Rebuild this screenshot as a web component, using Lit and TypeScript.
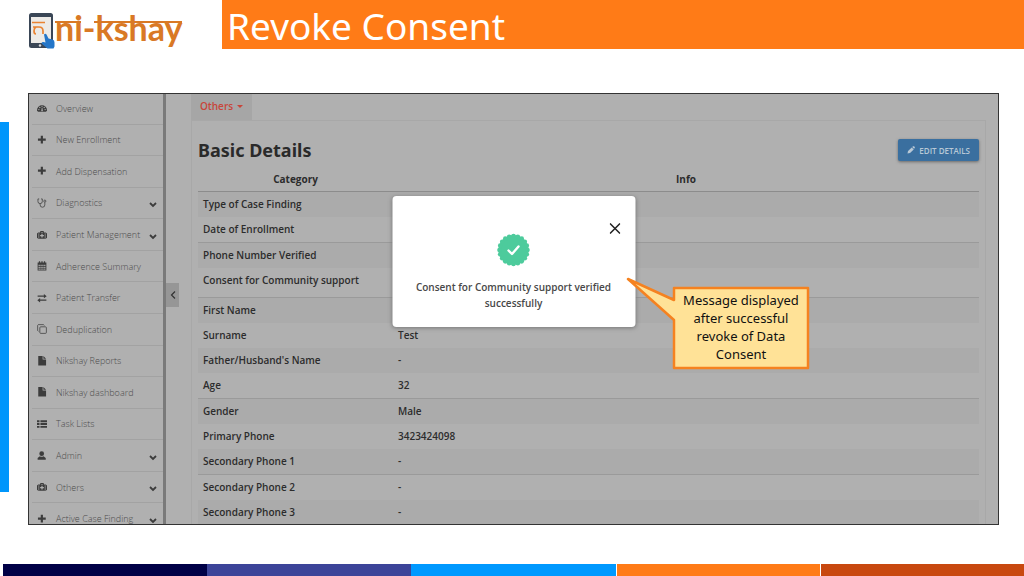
import { LitElement, html, css, svg } from "lit";
import { customElement } from "lit/decorators.js";
import { classMap } from "lit/directives/class-map.js";

const icons: Record<string, unknown> = {
  gauge: svg`<path d="M0 11.500a8 8 0 0 1 16 0l-1.500 2.500h-13z"/><g fill="#aeaeae"><circle cx="3" cy="10.500" r="1.100"/><circle cx="4.500" cy="7.200" r="1.100"/><circle cx="11.500" cy="7.200" r="1.100"/><circle cx="13" cy="10.500" r="1.100"/><circle cx="8" cy="5.600" r="1"/><path d="M7.500 7.500h1.200l.4 3.500a1.400 1.400 0 1 1-2 0z"/></g>`,
  plus: svg`<path d="M6 1h3.500v4.500H14V9H9.500v4.500H6V9H1.500V5.500H6z"/>`,
  steth: svg`<g fill="none" stroke="currentColor" stroke-width="1.200"><path d="M3.500 1.500H1.500v4a3.500 3.500 0 0 0 7 0v-4h-2M5 9v2a3.700 3.700 0 0 0 7.500 0V7"/><circle cx="12.500" cy="5" r="1.700"/></g>`,
  kit: svg`<path fill-rule="evenodd" d="M5 4V2.500L6 1.500h4l1 1V4h3l2 1.500v7L14 14H2l-2-1.500v-7L2 4zm1.500 0h3V3h-3zM7 6v2H5v2h2v2h2v-2h2V8H9V6zM2.500 5v8h1V5zm10 0v8h1V5z"/>`,
  calendar: svg`<path fill-rule="evenodd" d="M1 2.500h2V.5h2v2h2V.5h2v2h2V.5h2v2h2V15H1zM2.500 6v2h2V6zm3 0v2h2V6zm3 0v2h2V6zm3 0v2h2V6zm-9 3v2h2V9zm3 0v2h2V9zm3 0v2h2V9zm3 0v2h2V9zm-9 3v2h2v-2zm3 0v2h2v-2zm3 0v2h2v-2zm3 0v2h2v-2z"/>`,
  transfer: svg`<path d="M1 4h10V1.500L15.500 5 11 8.500V6H1zM15 10.500H5V8L.5 11.500 5 15v-2.500h10z"/>`,
  copy: svg`<g fill="none" stroke="currentColor" stroke-width="1.200"><rect x="4.500" y="4.500" width="10.500" height="10.500" rx="1.500"/><path d="M2.500 11.500H2L1 10.500V2l1-1h8.500l1 1v.5"/></g>`,
  file: svg`<path d="M2 0h7v5.500h5.500V15H2zM10.200 0l4.300 4.300h-4.300z"/>`,
  list: svg`<path d="M0 2h4v3H0zm5.500 0H16v3H5.500zM0 6.500h4v3H0zm5.500 0H16v3H5.500zM0 11h4v3H0zm5.500 0H16v3H5.500z"/>`,
  user: svg`<circle cx="7.500" cy="4.300" r="3.800"/><path d="M1 14v-3l3.500-2.800q3 1.800 6 0L14 11v3z"/>`,
  pencil: svg`<path d="M1 15l1-5 7.500-7 4 4L6 14zM10.500 2L12 .5q1-.5 2 0l1.500 1.500q.5 1 0 2L14 5.500z"/>`,
};

const icon = (name: string) =>
  html`<svg class="icon" viewBox="0 0 16 16" fill="currentColor" aria-hidden="true">${icons[name]}</svg>`;

interface MenuItem {
  icon: string;
  label: string;
  expandable?: boolean;
}

const menu: MenuItem[] = [
  { icon: "gauge", label: "Overview" },
  { icon: "plus", label: "New Enrollment" },
  { icon: "plus", label: "Add Dispensation" },
  { icon: "steth", label: "Diagnostics", expandable: true },
  { icon: "kit", label: "Patient Management", expandable: true },
  { icon: "calendar", label: "Adherence Summary" },
  { icon: "transfer", label: "Patient Transfer" },
  { icon: "copy", label: "Deduplication" },
  { icon: "file", label: "Nikshay Reports" },
  { icon: "file", label: "Nikshay dashboard" },
  { icon: "list", label: "Task Lists" },
  { icon: "user", label: "Admin", expandable: true },
  { icon: "kit", label: "Others", expandable: true },
  { icon: "plus", label: "Active Case Finding", expandable: true },
];

interface Detail {
  label: string;
  value: string;
  ruled?: boolean;
  tall?: boolean;
}

const details: Detail[] = [
  { label: "Type of Case Finding", value: "" },
  { label: "Date of Enrollment", value: "", ruled: true },
  { label: "Phone Number Verified", value: "" },
  { label: "Consent for Community support", value: "", ruled: true, tall: true },
  { label: "First Name", value: "" },
  { label: "Surname", value: "Test" },
  { label: "Father/Husband's Name", value: "-" },
  { label: "Age", value: "32", ruled: true },
  { label: "Gender", value: "Male" },
  { label: "Primary Phone", value: "3423424098" },
  { label: "Secondary Phone 1", value: "-", ruled: true },
  { label: "Secondary Phone 2", value: "-" },
  { label: "Secondary Phone 3", value: "-" },
];

@customElement("side-menu")
class SideMenu extends LitElement {
  static styles = css`
    :host { display: block; flex: none; width: 137px; box-sizing: border-box; border-right: 3px solid #7a7a7a; }
    .list { display: grid; grid-auto-rows: 1fr; height: 442px; margin: -1px 0 0; padding: 0; list-style: none; }
    .entry { border-bottom: 1px solid #a2a2a2; margin-left: 3px; }
    .link { display: flex; align-items: center; height: 100%; padding: 0 6px 0 5px; color: #4c4c4c; text-decoration: none; font-family: "Open Sans", sans-serif; font-weight: 300; font-size: 9px; }
    .icon { width: 10px; height: 10px; margin-right: 9px; color: #3c3c3c; flex: none; }
    .label { flex: 1; white-space: nowrap; }
    .chevron { width: 8px; height: 6px; margin-top: 4px; color: #3c3c3c; flex: none; }
  `;
  render() {
    return html`<nav aria-label="Main"><ul class="list">
      ${menu.map((m) => html`<li class="entry"><a class="link" href="#">
        ${icon(m.icon)}<span class="label">${m.label}</span>
        ${m.expandable
          ? html`<svg class="chevron" viewBox="0 0 8 6" fill="none" stroke="currentColor" stroke-width="1.800" aria-hidden="true"><path d="M1 1l3 3 3-3"/></svg>`
          : ""}
      </a></li>`)}
    </ul></nav>`;
  }
}

@customElement("details-panel")
class DetailsPanel extends LitElement {
  static styles = css`
    :host { display: block; flex: 1; min-width: 0; padding: 0 12px 0 12px; }
    .tab { display: block; height: 26px; width: 61px; margin: 0; padding: 0 0 2px; border: 0; background: #a6a6a6; color: #c8453a; font: 600 10px "Open Sans", sans-serif; }
    .caret { display: inline-block; margin-left: 4px; border: 3px solid transparent; border-top-color: currentColor; border-bottom: 0; vertical-align: 2px; }
    .panel { border: 1px solid #a8a8a8; border-bottom: 0; padding: 17px 6px 0; }
    .head { display: flex; justify-content: space-between; align-items: flex-start; height: 34px; }
    .title { margin: 0; font-size: 18px; line-height: 24px; font-weight: 700; color: #2a2a2a; }
    .edit { display: flex; align-items: center; gap: 4px; height: 22px; margin-top: 1px; padding: 0 9px; border: 0; border-radius: 2px; background: #3a6f9f; color: #b8c8d6; font: 600 8px "Open Sans", sans-serif; box-shadow: 0 1px 3px #6a6a6a; }
    .icon { width: 8px; height: 8px; }
    .table { width: 100%; border-collapse: separate; border-spacing: 0; table-layout: fixed; font-family: "Open Sans", sans-serif; font-size: 10px; line-height: 14px; color: #2c2c2c; }
    .category { width: 195px; }
    .heading { padding: 0 0 5px; height: 14px; font-weight: 700; border-bottom: 1px solid #8c8c8c; text-align: center; }
    .cell { box-sizing: border-box; height: 25px; padding: 5px 5px 6px; text-align: left; font-weight: 600; vertical-align: top; }
    .row:nth-child(odd) .cell { background: #ababab; }
    .ruled .cell { height: 26px; border-bottom: 1px solid #9a9a9a; }
    .tall .cell { height: 30px; }
  `;
  render() {
    return html`
      <button class="tab" type="button">Others<span class="caret"></span></button>
      <section class="panel">
        <div class="head">
          <h2 class="title">Basic Details</h2>
          <button class="edit" type="button">${icon("pencil")}EDIT DETAILS</button>
        </div>
        <table class="table">
          <thead><tr><th class="heading category" scope="col">Category</th><th class="heading" scope="col">Info</th></tr></thead>
          <tbody>
            ${details.map((d) => html`<tr class=${classMap({ row: true, ruled: !!d.ruled, tall: !!d.tall })}>
              <th class="cell" scope="row">${d.label}</th><td class="cell">${d.value}</td></tr>`)}
          </tbody>
        </table>
      </section>`;
  }
}

@customElement("consent-dialog")
class ConsentDialog extends LitElement {
  static styles = css`
    :host { display: block; }
    .box { position: relative; box-sizing: border-box; width: 243px; min-height: 131px; padding: 37px 20px 0; background: #fff; border-radius: 4px; box-shadow: 0 1px 4px #777; text-align: center; }
    .close { position: absolute; top: 24px; right: 12px; width: 17px; height: 17px; padding: 3px; border: 0; background: none; }
    .cross, .seal { display: block; }
    .seal { width: 34px; height: 34px; margin: 0 auto; }
    .message { margin: 12px 0 0; color: #484848; font-family: "Open Sans", sans-serif; font-size: 10px; line-height: 16px; font-weight: 600; }
  `;
  render() {
    const scallops = Array.from({ length: 20 }, (_, i) => {
      const a = (i * Math.PI) / 10;
      return svg`<circle cx=${17 + 14 * Math.cos(a)} cy=${17 + 14 * Math.sin(a)} r="2.300"/>`;
    });
    return html`<div class="box" role="dialog" aria-label="Consent status">
      <button class="close" type="button" aria-label="Close">
        <svg class="cross" viewBox="0 0 11 11" fill="none" stroke="#222" stroke-width="1.500"><path d="M.5.500l10 10M10.500.500l-10 10"/></svg>
      </button>
      <svg class="seal" viewBox="0 0 34 34" fill="#4dcb9c" aria-hidden="true">
        <circle cx="17" cy="17" r="15"/>${scallops}
        <path d="M12 17.500l3.500 3.500 6.500-7.500" fill="none" stroke="#fff" stroke-width="2.400" stroke-linecap="round" stroke-linejoin="round"/>
      </svg>
      <p class="message">Consent for Community support verified successfully</p>
    </div>`;
  }
}

@customElement("app-root")
class AppRoot extends LitElement {
  static styles = css`
    :host { display: flex; flex-direction: column; height: 100vh; background: #fff; font-family: "Noto Sans", "Open Sans", sans-serif; }
    .header { display: flex; flex: none; height: 49px; }
    .brand { display: flex; width: 194px; padding: 6px 0 0 28px; color: #d97925; }
    .device { width: 27px; height: 46px; flex: none; }
    .wordmark { position: relative; height: 40px; font-size: 34px; line-height: 44px; font-weight: 700; font-family: "Lato", sans-serif; }
    .wordmark::before { content: ""; position: absolute; top: 15px; left: 0; width: 26px; height: 2px; background: currentColor; }
    .wordmark::after { content: ""; position: absolute; top: 15px; left: 39px; right: 0; height: 2px; background: currentColor; }
    .title { flex: 1; margin: 0; padding-left: 5px; background: #ff7b17; color: #fff; font-size: 37px; line-height: 52px; font-weight: 400; height: 49px; }
    .main { display: flex; flex: 1; min-height: 0; padding: 44px 25px 39px 0; }
    .accent { flex: none; width: 9px; margin: 29px 19px 33px 0; background: #0096fb; }
    .frame { position: relative; display: flex; flex: 1; min-width: 0; border: 1px solid #333; background: #b0b0b0; }
    .screen { display: flex; flex: 1; min-width: 0; overflow: hidden; }
    .toggle { flex: none; width: 13px; height: 24px; margin: 189px 0 0; padding: 0; border: 0; background: #969696; color: #333; }
    .arrow { display: block; width: 6px; height: 8px; margin: auto; }
    .dialog { position: absolute; top: 102px; left: 50%; transform: translateX(-50%); }
    .callout { position: absolute; top: 183px; left: calc(50% + 112px); display: grid; width: 185px; height: 93px; }
    .bubble { grid-area: 1 / 1; width: 185px; height: 93px; }
    .note { grid-area: 1 / 1; margin: 14px 4px 0 50px; text-align: center; color: #111; font-size: 13px; line-height: 18px; position: relative; }
    .footer { display: grid; grid-template-columns: repeat(5, 1fr); flex: none; height: 12px; padding-left: 3px; }
    .navy { background: #000046; }
    .indigo { background: #3c4499; }
    .sky { background: #0099ff; }
    .orange { background: #ff7b17; border-left: 1px solid #fff; }
    .rust { background: #c8480f; border-left: 1px solid #fff; }
  `;
  render() {
    return html`
      <header class="header">
        <div class="brand">
          <svg class="device" viewBox="0 0 27 46" aria-hidden="true">
            <rect x="1" y="7" width="24" height="35" rx="2.500" fill="#3a4656"/>
            <rect x="3" y="11" width="20" height="26" fill="#eceae7"/>
            <path d="M4 16.500h13M5 21h6q4 0 4 4v3M8 21q-2 1-2 4 0 3 2 3" fill="none" stroke="#e98332" stroke-width="1.700"/>
            <circle cx="12" cy="39.500" r="1.200" fill="#ddd"/>
            <path d="M16 28.500q1.500-1.500 2.500 0l2 4 4 1q2 .5 2 3v4l-1 2h-6l-6-5q0-2 2-1.500l2 .5z" fill="#2576c8"/>
          </svg>
          <span class="wordmark">ni-kshay</span>
        </div>
        <h1 class="title">Revoke Consent</h1>
      </header>
      <main class="main">
        <div class="accent"></div>
        <div class="frame">
          <div class="screen">
            <side-menu></side-menu>
            <button class="toggle" type="button" aria-label="Collapse menu">
              <svg class="arrow" viewBox="0 0 6 8" fill="none" stroke="currentColor" stroke-width="1.200"><path d="M5 .500L1.500 4 5 7.500"/></svg>
            </button>
            <details-panel></details-panel>
          </div>
          <consent-dialog class="dialog"></consent-dialog>
          <aside class="callout">
            <svg class="bubble" viewBox="0 0 185 93" aria-hidden="true">
              <path d="M2 2L48 23V11h134v80H48V43z" fill="#ffe297" stroke="#f58220" stroke-width="2.500" stroke-linejoin="round"/>
            </svg>
            <p class="note">Message displayed after successful revoke of Data Consent</p>
          </aside>
        </div>
      </main>
      <footer class="footer">
        <div class="navy"></div><div class="indigo"></div><div class="sky"></div><div class="orange"></div><div class="rust"></div>
      </footer>`;
  }
}
